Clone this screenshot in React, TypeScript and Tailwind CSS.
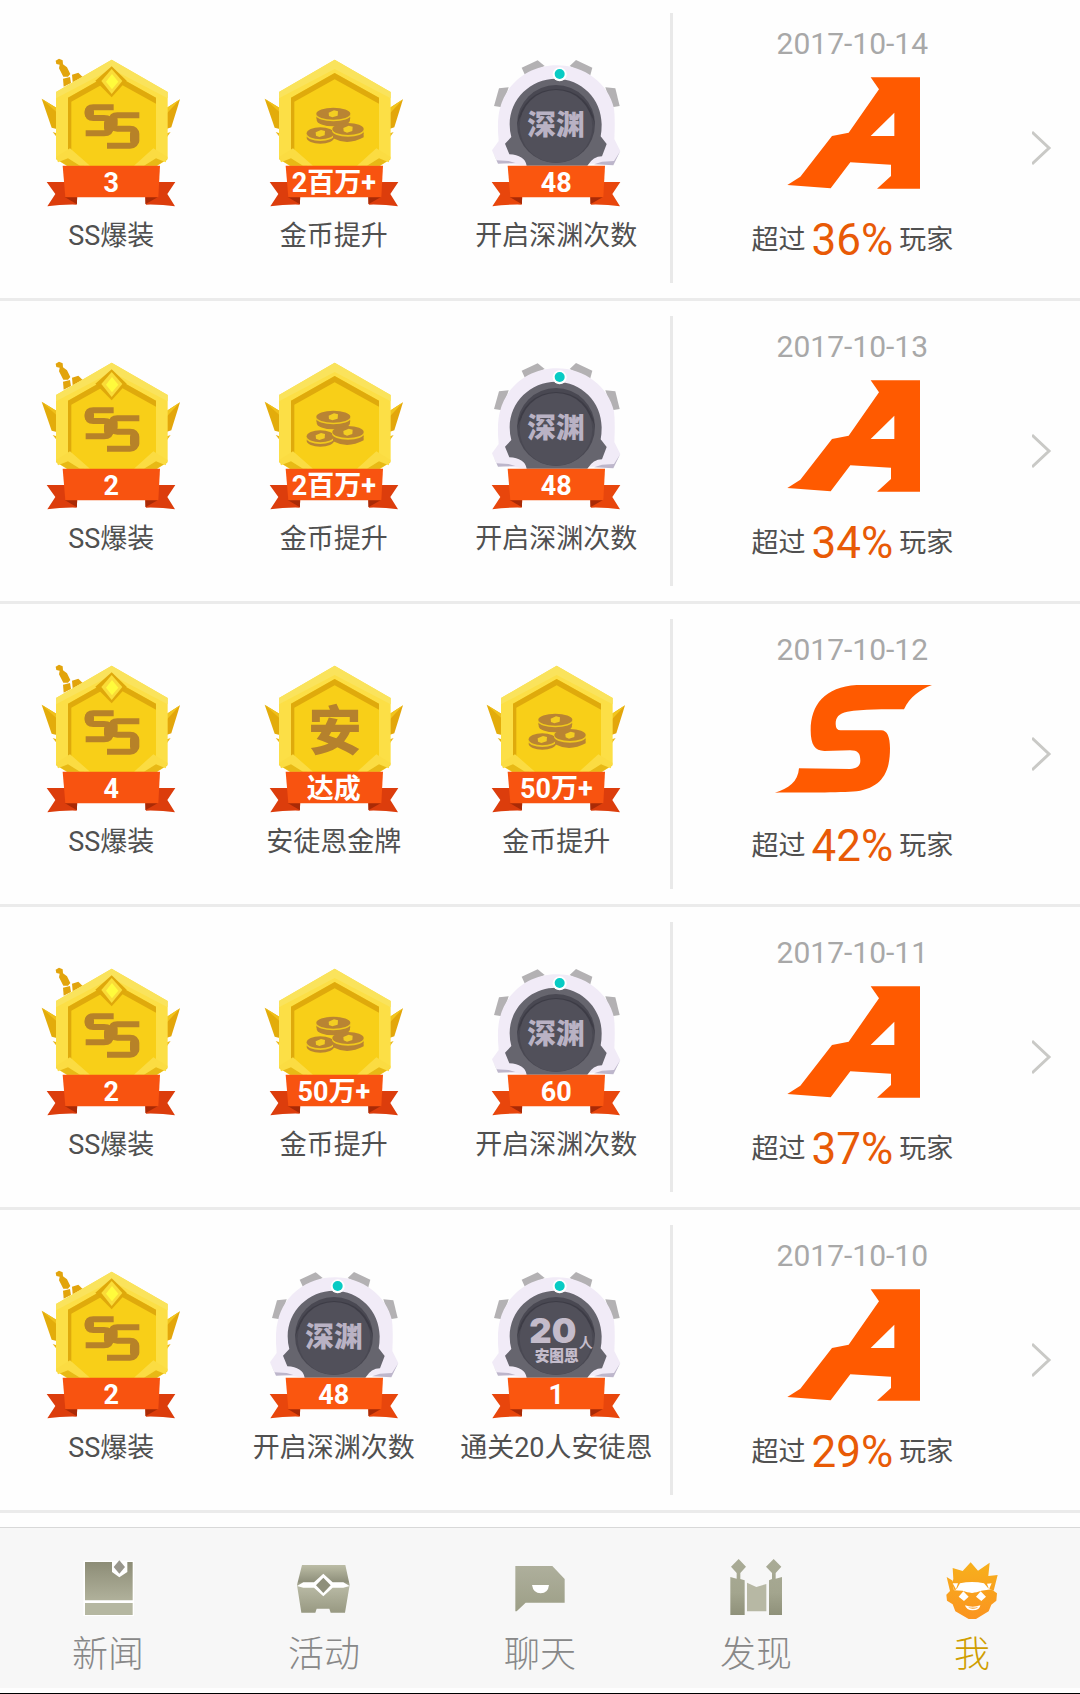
import type { ReactNode } from "react";

type MedalKind = "ss" | "coins" | "antuen" | "abyss" | "raid";

interface Medal {
  kind: MedalKind;
  value: string;
  label: string;
}

interface DayRecord {
  date: string;
  grade: "A" | "S";
  percent: string;
  medals: Medal[];
}

const ss = (value: string): Medal => ({ kind: "ss", value, label: "SS爆装" });
const coins = (value: string): Medal => ({ kind: "coins", value, label: "金币提升" });
const abyss = (value: string): Medal => ({ kind: "abyss", value, label: "开启深渊次数" });

const RECORDS: DayRecord[] = [
  { date: "2017-10-14", grade: "A", percent: "36%", medals: [ss("3"), coins("2百万+"), abyss("48")] },
  { date: "2017-10-13", grade: "A", percent: "34%", medals: [ss("2"), coins("2百万+"), abyss("48")] },
  {
    date: "2017-10-12",
    grade: "S",
    percent: "42%",
    medals: [ss("4"), { kind: "antuen", value: "达成", label: "安徒恩金牌" }, coins("50万+")],
  },
  { date: "2017-10-11", grade: "A", percent: "37%", medals: [ss("2"), coins("50万+"), abyss("60")] },
  {
    date: "2017-10-10",
    grade: "A",
    percent: "29%",
    medals: [ss("2"), abyss("48"), { kind: "raid", value: "1", label: "通关20人安徒恩" }],
  },
];

function Ribbon({ bright }: { bright?: boolean }) {
  return (
    <g>
      <path d="M50 411H106L142 457L140 479Q94 478 52 484L76 447Z" fill={bright ? "#e8460c" : "#dc3d0c"} />
      <path d="M436 411H382L346 457L348 479Q394 478 435 484L412 447Z" fill={bright ? "#e8460c" : "#dc3d0c"} />
      <path d="M104 456H141V478Z" fill="#a92a06" />
      <path d="M384 456H346V478Z" fill="#a92a06" />
      <path d="M98 362H390L385 457H106Z" fill={bright ? "#fa560f" : "#f85310"} />
    </g>
  );
}

function Coin({ x, y, rx }: { x: number; y: number; rx: number }) {
  return (
    <g>
      <ellipse cx={x} cy={y + 13} rx={rx} ry="18" fill="#b98433" />
      <ellipse cx={x} cy={y + 5} rx={rx + 1} ry="18" fill="#f0c81c" />
      <ellipse cx={x} cy={y} rx={rx} ry="18" fill="#b98433" />
      <path d={`M${x - 14} ${y - 3}L${x + 2} ${y - 10}L${x + 14} ${y - 7}L${x + 13} ${y + 6}L${x - 3} ${y + 11}L${x - 13} ${y + 7}Z`} fill="#f3cd22" />
    </g>
  );
}

function GoldMedal({ kind }: { kind: MedalKind }) {
  return (
    <svg viewBox="3 30 480 459" className="h-[153px] w-40" aria-hidden="true">
      {kind === "ss" && (
        <g fill="#e2a40c">
          <path d="M77 47L87 41L98 46L99 58L111 67L121 87L114 95H100L87 70L89 59L79 57Z" />
          <path d="M99 101L120 96L123 114L101 125Z" />
          <path d="M126 89L145 83L158 96L128 112Z" />
        </g>
      )}
      <path d="M35 161L80 189V252L65 248Z" fill="#e3ac0b" />
      <path d="M35 161L80 189V202Z" fill="#f0c01a" />
      <path d="M450 163L411 188V251L424 247Z" fill="#e3a60b" />
      <path d="M450 163L411 188V205Z" fill="#f2c51c" />
      <path d="M68 261L80 265V276Z M422 261L411 265V276Z" fill="#eab71c" />
      <path d="M245 44L413 141V342L380 364H112L78 342V141Z" fill="#fcdf46" />
      <path d="M245 44L413 141V160L245 72L78 160V141Z" fill="#fae35c" />
      <path d="M245 84L378 158V328L320 364H170L114 330V158Z" fill="#f8cf18" />
      <path d="M245 84L378 158V176L245 103L124 170V334L114 330V158Z" fill="#dfaa0c" />
      <path d="M78 342L114 330L165 362H112Z M413 342L378 328L322 362H380Z" fill="#e8b915" />
      <path d="M78 336L120 310L180 362H150L114 340L84 352Z M413 336L370 310L312 362H342L378 340L407 352Z" fill="#fbdc42" />
      {kind === "ss" && (
        <g>
          <path d="M245 64L290 107L245 157L196 107Z" fill="#dfa80b" />
          <path d="M245 72L277 108L245 147L214 108Z" fill="#fadc38" />
          <path d="M246 87L265 110L246 133L228 110Z" fill="#fffb3c" />
          <g fill="none" stroke="#b78228">
            <path strokeWidth="18" d="M251 187H190Q173 187 173 203Q173 219 190 219H222Q242 219 242 236V246Q242 265 222 265H167" />
            <path strokeWidth="18" d="M328 211H262Q245 211 245 227Q245 251 262 251H300Q318 251 318 268V283Q318 302 300 302H231" />
            <path strokeWidth="28" strokeLinecap="round" d="M178 199V207M236 234V250M249 224V238M314 266V287" />
          </g>
        </g>
      )}
      {kind === "coins" && (
        <g>
          <ellipse cx="241" cy="225" rx="50" ry="19" fill="#b98433" />
          <Coin x={241} y={206} rx={51} />
          <Coin x={202} y={265} rx={41} />
          <Coin x={285} y={252} rx={47} />
          <path d="M240 270Q284 290 332 268V277Q284 303 240 280Z" fill="#b98433" />
        </g>
      )}
      {kind === "antuen" && (
        <text
          x="246"
          y="296"
          textAnchor="middle"
          fontSize="160"
          className="font-['Noto_Sans_CJK_SC',sans-serif] font-black"
          fill="#b5812d"
        >
          安
        </text>
      )}
      <Ribbon />
    </svg>
  );
}

function GearMedal({ kind }: { kind: MedalKind }) {
  return (
    <svg viewBox="22 30 480 459" className="h-[153px] w-40" aria-hidden="true">
      <g fill="#b3b1b3">
        <path d="M159 68L207 46L228 63L170 92Z" />
        <path d="M371 68L322 45L303 63L364 94Z" />
        <path d="M91 130L120 127L100 187L76 183Z" />
        <path d="M440 130L410 127L430 187L453 183Z" />
      </g>
      <path
        d="M264 61C348 61 419 116 436 190Q440 225 437 282L455 318L434 356H354L264 340L176 362L88 352L70 316L90 288Q84 225 94 190C112 116 180 61 264 61Z"
        fill="#f1ebf7"
      />
      <path d="M70 316L84 346L120 348L140 354L88 356Z M455 318L436 348L400 350L376 358L434 361Z" fill="#bdb6cb" />
      <path
        d="M262 101C338 101 399 162 399 238Q399 258 396 274L414 297L400 334Q374 334 356 362H174Q168 330 122 328L109 296L128 276Q123 258 123 238C123 162 186 101 262 101Z"
        fill="#66656e"
      />
      <circle cx="262" cy="237" r="117" fill="#494852" />
      <path d="M146 238A117 117 0 0 1 379 238A120 108 0 0 0 146 238" fill="#3d3c46" />
      <circle cx="262" cy="244" r="109" fill="#51505a" />
      <circle cx="273" cy="88" r="21" fill="#ffffff" />
      <circle cx="273" cy="87" r="15" fill="#08cbc4" />
      {kind === "abyss" ? (
        <text
          x="262"
          y="269"
          textAnchor="middle"
          fontSize="86"
          className="font-['Noto_Sans_CJK_SC',sans-serif] font-black"
          fill="#b9b2c4"
        >
          深渊
        </text>
      ) : (
        <g fill="#c4bccb" className="font-['Noto_Sans_CJK_SC',sans-serif] font-black">
          <text x="182" y="259" fontSize="104" className="font-['Inter',sans-serif] font-black">
            20
          </text>
          <text x="330" y="269" fontSize="42" className="font-bold">
            人
          </text>
          <text x="264" y="311" fontSize="44" textAnchor="middle">
            安图恩
          </text>
        </g>
      )}
      <g transform="translate(19 0)">
        <Ribbon bright />
      </g>
    </svg>
  );
}

function GradeEmblem({ grade }: { grade: "A" | "S" }) {
  return grade === "A" ? (
    <svg viewBox="81 222 510 360" className="h-[120px] w-[170px]" role="img" aria-label="A">
      <path
        fill="#ff5a00"
        fillRule="evenodd"
        d="M392 232H540V566H411L453 528V494L331 487L272 565L142 555L181 530L276 408L326 398L417 268ZM463 338L392 408H463Z"
      />
    </svg>
  ) : (
    <svg viewBox="81 180 510 360" className="h-[120px] w-[170px]" role="img" aria-label="S">
      <path
        fill="#ff5a00"
        d="M576 195C540 209 510 230 492 268C430 268 370 268 322 275C296 280 287 292 287 312Q287 331 302 331H424C441 331 450 350 450 385C450 455 428 502 350 514C300 519 180 517 105 518C145 506 174 486 177 445L330 447C351 446 361 437 361 422C361 400 354 391 330 391L253 393C225 392 212 375 212 330C212 255 255 200 350 195Z"
      />
    </svg>
  );
}

function MedalCell({ medal }: { medal: Medal }) {
  const isGear = medal.kind === "abyss" || medal.kind === "raid";
  return (
    <div className="flex flex-col items-center gap-3">
      <div className="relative">
        {isGear ? <GearMedal kind={medal.kind} /> : <GoldMedal kind={medal.kind} />}
        <span className="absolute inset-x-0 top-28 text-center text-[27px] leading-8 font-bold whitespace-nowrap text-white">
          {medal.value}
        </span>
      </div>
      <span className="text-[27px] leading-8 whitespace-nowrap text-[#505050]">{medal.label}</span>
    </div>
  );
}

function RecordRow({ record }: { record: DayRecord }) {
  return (
    <li className="border-b-3 border-[#ebebeb]">
      <a href={`#${record.date}`} className="flex items-stretch">
        <div className="grid w-[62%] grid-cols-3 pt-[57px] pr-0.5 pb-[46px]">
          {record.medals.map((medal) => (
            <MedalCell key={medal.kind} medal={medal} />
          ))}
        </div>
        <div className="my-[15px] w-[3px] bg-[#e9e9e9]" />
        <div className="flex flex-1 flex-col items-center pt-7">
          <time className="text-[30px] leading-9 text-[#a8a8a8]" dateTime={record.date}>
            {record.date}
          </time>
          <div className="mt-3">
            <GradeEmblem grade={record.grade} />
          </div>
          <p className="mt-[22px] flex items-center gap-1.5 text-[27px] leading-12 whitespace-nowrap text-[#505050]">
            <span>超过</span>
            <strong className="text-[44px] font-normal text-[#e85a06]">{record.percent}</strong>
            <span>玩家</span>
          </p>
        </div>
        <div className="flex w-12 items-center">
          <svg viewBox="0 0 20 36" className="h-9 w-5" aria-hidden="true">
            <path d="M0 2L17 18L0 34" fill="none" stroke="#c9c9c6" strokeWidth="3" />
          </svg>
        </div>
      </a>
    </li>
  );
}

function NavGradient({ id }: { id: string }) {
  return (
    <defs>
      <linearGradient id={id} x1="0" y1="180" x2="0" y2="350" gradientUnits="userSpaceOnUse">
        <stop offset="0" stopColor="#8b8b75" />
        <stop offset="1" stopColor="#bfc0aa" />
      </linearGradient>
    </defs>
  );
}

function NewsIcon() {
  return (
    <svg viewBox="228 165 192 192" className="size-16" aria-hidden="true">
      <NavGradient id="news-fill" />
      <path d="M250 182H402V348H250Z" fill="#ffffff" />
      <path d="M255 186H336V216L358 232L382 216V186H398V301H255Z" fill="url(#news-fill)" />
      <path d="M358 181L375 201L358 221L341 201Z" fill="#98968c" />
      <path d="M255 309H398V345H255Z" fill="#b5b7a1" />
    </svg>
  );
}

function ChestIcon() {
  return (
    <svg viewBox="876 165 192 192" className="size-16" aria-hidden="true">
      <defs>
        <linearGradient id="chest-fill" x1="0" y1="195" x2="0" y2="338" gradientUnits="userSpaceOnUse">
          <stop offset="0" stopColor="#bcbda6" />
          <stop offset="0.35" stopColor="#8f907b" />
          <stop offset="0.45" stopColor="#b8b9a4" />
          <stop offset="1" stopColor="#989982" />
        </linearGradient>
      </defs>
      <path d="M906 195H1036L1049 255L1035 338H992L988 326H950L946 338H904L891 255Z" fill="url(#chest-fill)" />
      <path d="M891 258L910 247H942L970 221L998 247H1030L1049 258L1030 263H998L970 289L942 263H910Z" fill="#ffffff" />
      <path d="M970 233L992 256L970 279L948 256Z" fill="#8e8f7b" />
    </svg>
  );
}

function ChatIcon() {
  return (
    <svg viewBox="84 165 192 192" className="size-16" aria-hidden="true">
      <defs>
        <linearGradient id="chat-fill" x1="0" y1="198" x2="0" y2="334" gradientUnits="userSpaceOnUse">
          <stop offset="0" stopColor="#aeaf9c" />
          <stop offset="1" stopColor="#9d9f87" />
        </linearGradient>
      </defs>
      <path d="M106 198H217L254 237V308H137L110 334H106Z" fill="url(#chat-fill)" />
      <path d="M156 255H207Q204 280 182 280Q160 280 156 255Z" fill="#ffffff" />
    </svg>
  );
}

function GateIcon() {
  return (
    <svg viewBox="732 165 192 192" className="size-16" aria-hidden="true">
      <defs>
        <linearGradient id="gate-fill" x1="0" y1="178" x2="0" y2="345" gradientUnits="userSpaceOnUse">
          <stop offset="0" stopColor="#a9ab96" />
          <stop offset="0.6" stopColor="#a3a58e" />
          <stop offset="1" stopColor="#8f917a" />
        </linearGradient>
      </defs>
      <g fill="url(#gate-fill)">
        <path d="M776 177L798 200L781 219V237L794 241V345H751V231L770 236V219L753 200Z" />
        <path d="M881 177L904 200L887 219V236L906 231V345H867V241L876 237V219L858 200Z" />
      </g>
      <path d="M801 248L829 261L859 252V334H801Z" fill="#b7b8a4" />
    </svg>
  );
}

function HeroIcon() {
  return (
    <svg viewBox="120 165 192 192" className="size-16" aria-hidden="true">
      <defs>
        <linearGradient id="hero-fill" x1="0" y1="187" x2="0" y2="357" gradientUnits="userSpaceOnUse">
          <stop offset="0" stopColor="#f7b01c" />
          <stop offset="1" stopColor="#fb9420" />
        </linearGradient>
      </defs>
      <path d="M155 246L280 246L274 280L216 290L160 280Z" fill="#ffffff" />
      <g fill="url(#hero-fill)">
        <path d="M158 204L188 213L212 187L234 212L269 188L265 228L293 225L281 272L264 264L252 250Q216 242 180 250L172 264L164 272L155 248L160 238Z" />
        <path d="M140 231L156 241L162 271L188 272Q216 284 244 272L274 268L291 280L289 302L274 314L266 334L228 357H206L166 334L158 313L141 302L139 284L150 273Z" />
      </g>
      <path d="M158 250L174 250L168 268Z M261 251L275 250L267 268Z" fill="#ffffff" />
      <path d="M172 270Q184 254 196 253H238Q248 256 258 270Q238 267 216 279Q194 267 172 270Z" fill="#ffffff" />
      <path d="M190 274L206 290L192 303L176 290Z M242 274L258 290L244 303L228 290Z" fill="#ffffff" />
      <path d="M195 316Q218 324 241 316Q240 331 218 331Q199 331 195 316Z" fill="#ffffff" />
      <path d="M204 320Q218 325 234 320Q231 326 218 327Q208 326 204 320Z" fill="#fbb65c" />
    </svg>
  );
}

const TABS: { label: string; icon: ReactNode; active?: boolean }[] = [
  { label: "新闻", icon: <NewsIcon /> },
  { label: "活动", icon: <ChestIcon /> },
  { label: "聊天", icon: <ChatIcon /> },
  { label: "发现", icon: <GateIcon /> },
  { label: "我", icon: <HeroIcon />, active: true },
];

export default function App() {
  return (
    <div className="flex min-h-screen flex-col overflow-hidden bg-[#fefefe] font-['Roboto','Noto_Sans_CJK_SC',sans-serif]" lang="zh-CN">
      <main className="-mt-0.5">
        <ul>
          {RECORDS.map((record) => (
            <RecordRow key={record.date} record={record} />
          ))}
        </ul>
      </main>
      <footer className="mt-auto border-b border-black pb-[5px]">
        <nav className="grid grid-cols-5 border-t border-[#d8d8d8] bg-[#f7f7f7]">
          {TABS.map((tab) => (
            <button
              key={tab.label}
              type="button"
              aria-current={tab.active ? "page" : undefined}
              className="flex flex-col items-center gap-4 pt-[27px] pb-[13px]"
            >
              {tab.icon}
              <span
                className={
                  tab.active
                    ? "text-4xl leading-10 font-light text-[#cf9e00]"
                    : "text-4xl leading-10 font-light text-[#888888]"
                }
              >
                {tab.label}
              </span>
            </button>
          ))}
        </nav>
      </footer>
    </div>
  );
}
